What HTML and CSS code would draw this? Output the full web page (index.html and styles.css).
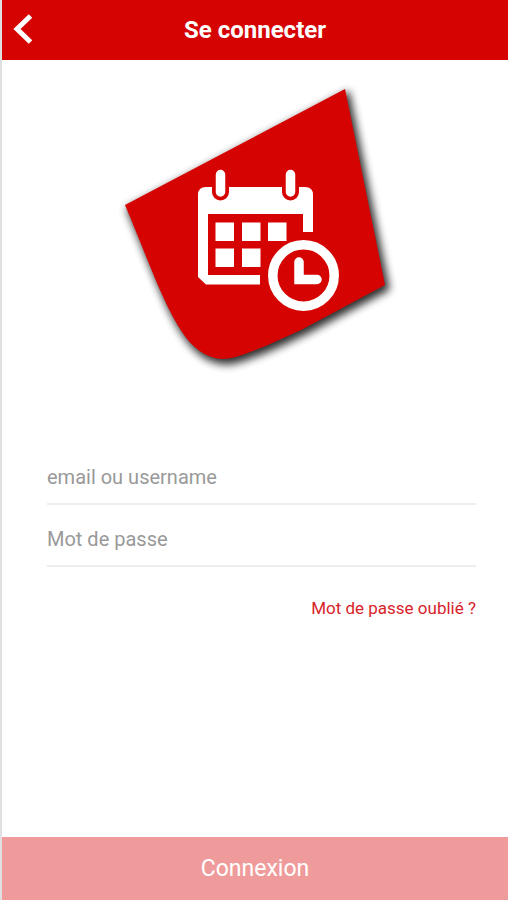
FILE: index.html
```html
<!DOCTYPE html>
<html lang="fr">
<head>
<meta charset="utf-8">
<meta name="viewport" content="width=device-width, initial-scale=1">
<title>Se connecter</title>
<link rel="stylesheet" href="styles.css">
</head>
<body>
<form class="screen">
  <header class="topbar">
    <button class="back" type="button" aria-label="Retour">
      <svg width="20" height="32" viewBox="0 0 20 32"><path d="M18.500 2 5 15l13.500 13" fill="none" stroke="#fff" stroke-width="5"/></svg>
    </button>
    <h1 class="title">Se connecter</h1>
  </header>
  <main class="content">
    <svg class="logo" viewBox="95 71 320 320" aria-hidden="true">
      <defs>
        <filter id="shadow" x="-20%" y="-20%" width="140%" height="140%"><feGaussianBlur stdDeviation="4"/></filter>
        <mask id="rings" maskUnits="userSpaceOnUse" x="95" y="71" width="320" height="320">
          <rect x="95" y="71" width="320" height="320" fill="#fff"/>
          <path d="M220.500 174v18M290.500 174v18" stroke="#000" stroke-width="17" stroke-linecap="round"/>
        </mask>
        <path id="sheet" d="M125 205 345 89 385 285 303 329C285 337 268 346 250 352C240 356 231 359 222 359C205 358 192 347 182 332C162 302 146 254 125 205Z"/>
      </defs>
      <use href="#sheet" transform="translate(3 4)" filter="url(#shadow)" stroke="#000" stroke-width="3" opacity=".82"/>
      <use href="#sheet" fill="#d60303"/>
      <g fill="#fff">
        <path mask="url(#rings)" d="M206 187H305Q313 187 313 195V232H303V214H208V275H260V284.500H206L198 277V195Q198 187 206 187Z"/>
        <path d="M215.500 222.500h18.500v18.500h-18.500zM242 222.500h18.500v18.500h-18.500zM268 222.500h18.500v18.500h-18.500zM215.500 248.500h18.500v18.500h-18.500zM242 248.500h18.500v18.500h-18.500z"/>
      </g>
      <g fill="none" stroke="#fff" stroke-width="9.500" stroke-linecap="round">
        <path d="M220.500 174.500v17.500M290.500 174.500v17.500"/>
        <circle cx="303.500" cy="275.500" r="30.700"/>
        <path d="M299 262v17.500H317"/>
      </g>
    </svg>
    <div class="fields">
      <input class="field" type="text" placeholder="email ou username" aria-label="email ou username">
      <input class="field" type="password" placeholder="Mot de passe" aria-label="Mot de passe">
      <a class="forgot" href="#">Mot de passe oublié ?</a>
    </div>
  </main>
  <button class="submit" type="submit">Connexion</button>
</form>
</body>
</html>
```
FILE: styles.css
```css
* {
  box-sizing: border-box;
}

body {
  margin: 0;
  background: #fff;
  font-family: Roboto, sans-serif;
}

button,
input {
  font: inherit;
  border: 0;
  border-radius: 0;
}

.screen {
  display: flex;
  flex-direction: column;
  min-height: 100vh;
  border-left: 2px solid #e0e0e2;
}

.topbar {
  display: grid;
  grid-template-columns: 48px 1fr 48px;
  align-items: center;
  height: 60px;
  background: #d60303;
  color: #fff;
}

.back {
  display: flex;
  padding: 0 10px;
  background: none;
}

.title {
  margin: 0;
  font-size: 24px;
  line-height: 32px;
  font-weight: 700;
  text-align: center;
}

.content {
  flex: 1;
  display: flex;
  flex-direction: column;
  align-items: center;
  padding-top: 11px;
}

.logo {
  width: 320px;
  height: 320px;
}

.fields {
  align-self: stretch;
  display: flex;
  flex-direction: column;
  margin-top: 52px;
  padding: 0 32px 0 45px;
}

.field {
  width: 100%;
  height: 62px;
  padding: 8px 0 0;
  border-bottom: 2px solid #eee;
  background: none;
  color: #333;
  font-size: 20px;
  outline: none;
}

.field::placeholder {
  color: #999;
  opacity: 1;
}

.forgot {
  align-self: flex-end;
  margin-top: 29px;
  color: #d8232a;
  font-size: 17px;
  line-height: 24px;
  text-decoration: none;
}

.submit {
  height: 63px;
  padding: 0;
  background: #f09b9b;
  color: #fff;
  font-size: 23px;
}
```
